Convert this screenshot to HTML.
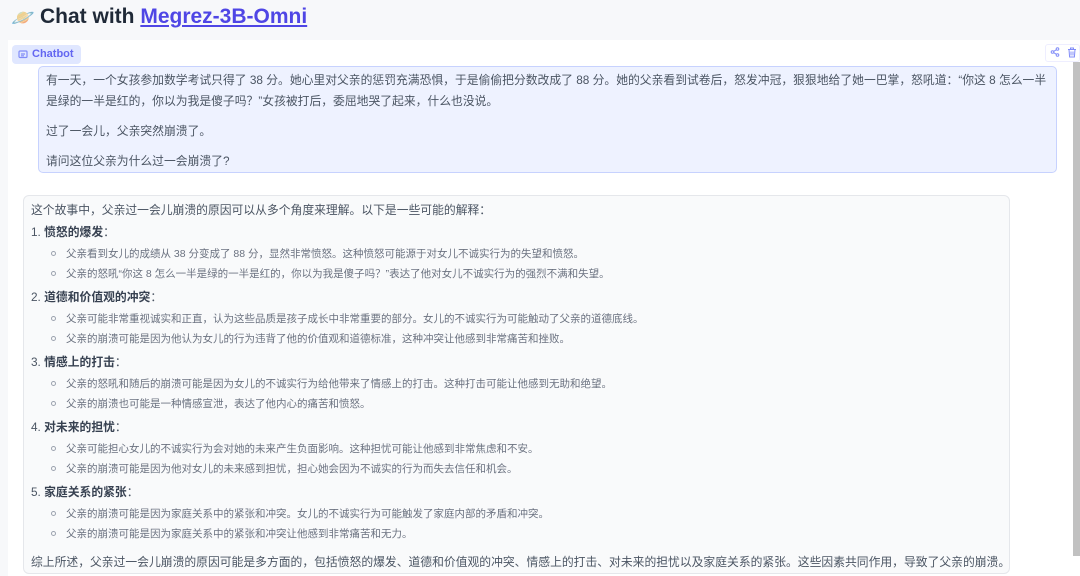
<!DOCTYPE html>
<html><head><meta charset="utf-8"><style>
*{margin:0;padding:0;box-sizing:border-box}
body{width:1080px;height:576px;overflow:hidden;background:#f7f8fa;font-family:"Liberation Sans","Noto Sans CJK SC",sans-serif;position:relative;color:#374151}
.abs{position:absolute;white-space:nowrap}
h1{position:absolute;left:40px;top:5px;font-size:21px;font-weight:700;color:#1f2937;font-family:"Liberation Sans",sans-serif}
h1 a{color:#4f46e5;text-decoration:underline}
.panel{position:absolute;left:8px;top:40px;width:1072px;height:536px;background:#fff}
.tag{position:absolute;left:12px;top:45px;width:69px;height:19px;background:#e0e7ff;border-radius:4px;color:#6366f1;font-size:11px;font-weight:700;padding:3px 0 0 20px}
.user{position:absolute;left:38px;top:66px;width:1019px;height:107px;background:#eef2ff;border:1px solid #c7d2fe;border-radius:5px}
.bot{position:absolute;left:23px;top:195px;width:987px;height:379px;background:#f9fafb;border:1px solid #e5e7eb;border-radius:6px}
.t{font-size:11.8px;color:#4b5563}
.s{font-size:10.5px;color:#6b7280}
.b{font-weight:700;color:#374151}
.dot{position:absolute;width:5px;height:5px;border:1px solid #9ca3af;border-radius:50%}
.sb{position:absolute;left:1073px;top:62px;width:7px;height:494px;background:#c1c1c1}
</style></head><body>
<div class="abs" style="left:11px;top:6px;font-size:19px">🪐</div>
<h1>Chat with <a>Megrez-3B-Omni</a></h1>
<div class="panel"></div>
<div class="tag"><svg class="abs" style="left:6px;top:5px" width="10" height="10" viewBox="0 0 10 10" fill="none" stroke="#818cf8" stroke-width="1.2"><rect x="1" y="1" width="8" height="6.5" rx="1"/><path d="M3 4h4M3 5.8h3"/></svg>Chatbot</div>
<div class="abs" style="left:1045px;top:44px;width:35px;height:18px;background:#fff;border:1px solid #eef;border-radius:3px"></div>
<svg class="abs" style="left:1050px;top:47px" width="10" height="10" viewBox="0 0 10 10" fill="none" stroke="#818cf8" stroke-width="1"><circle cx="7.5" cy="2" r="1.3"/><circle cx="2.5" cy="5" r="1.3"/><circle cx="7.5" cy="8" r="1.3"/><path d="M3.6 4.4l2.8-1.7M3.6 5.6l2.8 1.7"/></svg>
<svg class="abs" style="left:1067px;top:47px" width="10" height="11" viewBox="0 0 10 11" fill="none" stroke="#818cf8" stroke-width="1"><path d="M1 2.5h8M3.5 2.5V1h3v1.5M2 2.5l.6 7.5h4.8L8 2.5M4 4.5v4M6 4.5v4"/></svg>
<div class="sb"></div>
<div class="user"></div>
<div class="abs t" style="left:46px;top:71px">有一天，一个女孩参加数学考试只得了 38 分。她心里对父亲的惩罚充满恐惧，于是偷偷把分数改成了 88 分。她的父亲看到试卷后，怒发冲冠，狠狠地给了她一巴掌，怒吼道：“你这 8 怎么一半</div>
<div class="abs t" style="left:46px;top:92px">是绿的一半是红的，你以为我是傻子吗？”女孩被打后，委屈地哭了起来，什么也没说。</div>
<div class="abs t" style="left:46px;top:122px">过了一会儿，父亲突然崩溃了。</div>
<div class="abs t" style="left:46px;top:152px">请问这位父亲为什么过一会崩溃了?</div>
<div class="bot"></div>
<div class="abs t" style="left:31px;top:201px">这个故事中，父亲过一会儿崩溃的原因可以从多个角度来理解。以下是一些可能的解释：</div>
<div class="abs t" style="left:31px;top:223px">1. <span class="b">愤怒的爆发</span>：</div>
<div class="abs s" style="left:66px;top:246px">父亲看到女儿的成绩从 38 分变成了 88 分，显然非常愤怒。这种愤怒可能源于对女儿不诚实行为的失望和愤怒。</div>
<div class="abs s" style="left:66px;top:266px">父亲的怒吼“你这 8 怎么一半是绿的一半是红的，你以为我是傻子吗？”表达了他对女儿不诚实行为的强烈不满和失望。</div>
<div class="abs t" style="left:31px;top:288px">2. <span class="b">道德和价值观的冲突</span>：</div>
<div class="abs s" style="left:66px;top:311px">父亲可能非常重视诚实和正直，认为这些品质是孩子成长中非常重要的部分。女儿的不诚实行为可能触动了父亲的道德底线。</div>
<div class="abs s" style="left:66px;top:331px">父亲的崩溃可能是因为他认为女儿的行为违背了他的价值观和道德标准，这种冲突让他感到非常痛苦和挫败。</div>
<div class="abs t" style="left:31px;top:353px">3. <span class="b">情感上的打击</span>：</div>
<div class="abs s" style="left:66px;top:376px">父亲的怒吼和随后的崩溃可能是因为女儿的不诚实行为给他带来了情感上的打击。这种打击可能让他感到无助和绝望。</div>
<div class="abs s" style="left:66px;top:396px">父亲的崩溃也可能是一种情感宣泄，表达了他内心的痛苦和愤怒。</div>
<div class="abs t" style="left:31px;top:418px">4. <span class="b">对未来的担忧</span>：</div>
<div class="abs s" style="left:66px;top:441px">父亲可能担心女儿的不诚实行为会对她的未来产生负面影响。这种担忧可能让他感到非常焦虑和不安。</div>
<div class="abs s" style="left:66px;top:461px">父亲的崩溃可能是因为他对女儿的未来感到担忧，担心她会因为不诚实的行为而失去信任和机会。</div>
<div class="abs t" style="left:31px;top:483px">5. <span class="b">家庭关系的紧张</span>：</div>
<div class="abs s" style="left:66px;top:506px">父亲的崩溃可能是因为家庭关系中的紧张和冲突。女儿的不诚实行为可能触发了家庭内部的矛盾和冲突。</div>
<div class="abs s" style="left:66px;top:526px">父亲的崩溃可能是因为家庭关系中的紧张和冲突让他感到非常痛苦和无力。</div>
<div class="abs t" style="left:31px;top:553px">综上所述，父亲过一会儿崩溃的原因可能是多方面的，包括愤怒的爆发、道德和价值观的冲突、情感上的打击、对未来的担忧以及家庭关系的紧张。这些因素共同作用，导致了父亲的崩溃。</div>
<div class="dot" style="left:51px;top:251px"></div><div class="dot" style="left:51px;top:271px"></div>
<div class="dot" style="left:51px;top:316px"></div><div class="dot" style="left:51px;top:336px"></div>
<div class="dot" style="left:51px;top:381px"></div><div class="dot" style="left:51px;top:401px"></div>
<div class="dot" style="left:51px;top:446px"></div><div class="dot" style="left:51px;top:466px"></div>
<div class="dot" style="left:51px;top:511px"></div><div class="dot" style="left:51px;top:531px"></div>
</body></html>
